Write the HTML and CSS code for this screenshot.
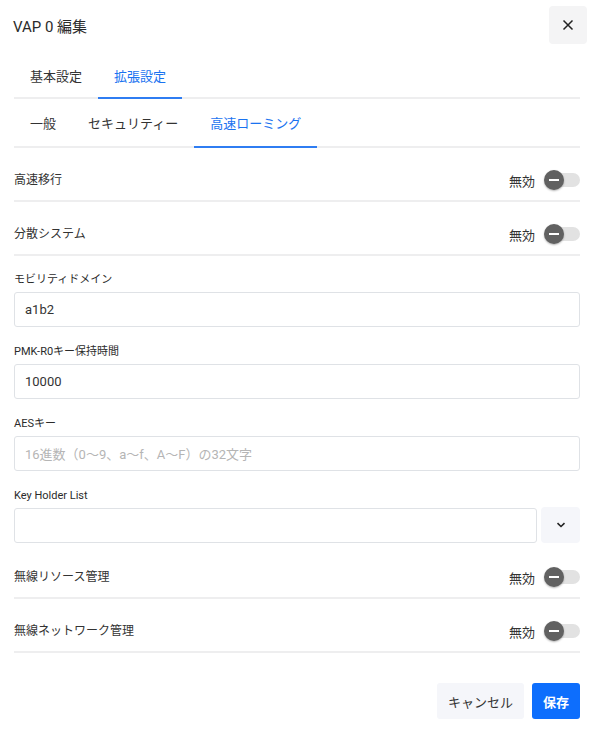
FILE: index.html
```html
<!DOCTYPE html>
<html lang="ja">
<head>
<meta charset="utf-8">
<title>VAP 0 編集</title>
<link rel="stylesheet" href="styles.css">
</head>
<body>
<div class="dialog">
  <header class="dlg-header">
    <h1 class="dlg-title">VAP 0 編集</h1>
    <button class="close-btn" aria-label="閉じる">
      <svg width="12" height="12" viewBox="0 0 12 12"><path d="M1.5 1.5 L10.5 10.5 M10.5 1.5 L1.5 10.5" stroke="#222" stroke-width="1.5" fill="none"/></svg>
    </button>
  </header>

  <nav class="tabs tabs-main">
    <span class="tab">基本設定</span>
    <span class="tab active">拡張設定</span>
  </nav>
  <nav class="tabs tabs-sub">
    <span class="tab">一般</span>
    <span class="tab">セキュリティー</span>
    <span class="tab active">高速ローミング</span>
  </nav>

  <div class="form">
    <div class="switch-row">
      <span class="row-label">高速移行</span>
      <span class="switch-wrap"><span class="switch-text">無効</span><span class="switch"><span class="knob"></span></span></span>
    </div>
    <div class="switch-row">
      <span class="row-label">分散システム</span>
      <span class="switch-wrap"><span class="switch-text">無効</span><span class="switch"><span class="knob"></span></span></span>
    </div>

    <div class="field first-field">
      <label class="field-label">モビリティドメイン</label>
      <div class="input">a1b2</div>
    </div>
    <div class="field">
      <label class="field-label">PMK-R0キー保持時間</label>
      <div class="input">10000</div>
    </div>
    <div class="field">
      <label class="field-label">AESキー</label>
      <div class="input placeholder">16進数（0〜9、a〜f、A〜F）の32文字</div>
    </div>
    <div class="field">
      <label class="field-label">Key Holder List</label>
      <div class="select-row">
        <div class="input grow"></div>
        <button class="drop-btn" aria-label="展開">
          <svg width="10" height="6" viewBox="0 0 10 6"><path d="M1.5 1.2 L5 4.5 L8.5 1.2" stroke="#222" stroke-width="1.6" fill="none"/></svg>
        </button>
      </div>
    </div>

    <div class="switch-row after-field">
      <span class="row-label">無線リソース管理</span>
      <span class="switch-wrap"><span class="switch-text">無効</span><span class="switch"><span class="knob"></span></span></span>
    </div>
    <div class="switch-row">
      <span class="row-label">無線ネットワーク管理</span>
      <span class="switch-wrap"><span class="switch-text">無効</span><span class="switch"><span class="knob"></span></span></span>
    </div>
  </div>

  <footer class="dlg-footer">
    <button class="btn btn-cancel">キャンセル</button>
    <button class="btn btn-save">保存</button>
  </footer>
</div>
</body>
</html>
```

FILE: styles.css
```css
* { box-sizing: border-box; }
html, body {
  margin: 0;
  padding: 0;
  background: #fff;
}
body {
  font-family: Roboto, "Noto Sans CJK JP", sans-serif;
  color: #333;
  width: 594px;
}
.dialog {
  padding: 6px 14px 0 14px;
}
.dlg-header {
  display: flex;
  align-items: center;
  justify-content: space-between;
  height: 38px;
  margin-right: -7px;
}
.dlg-title {
  margin: 0;
  font-size: 15px;
  font-weight: 400;
  color: #2b2b2b;
  margin-left: -1px;
}
.close-btn {
  width: 38px;
  height: 38px;
  border: none;
  border-radius: 4px;
  background: #f4f4f5;
  display: flex;
  align-items: center;
  justify-content: center;
  padding: 0;
}
.tabs {
  display: flex;
  border-bottom: 2px solid #eeeeef;
}
.tabs-main {
  margin-top: 10px;
}
.tab {
  font-size: 13px;
  color: #333;
  padding: 0 16px;
  position: relative;
  display: flex;
  align-items: center;
}
.tabs-main .tab { height: 43px; }
.tabs-sub .tab { height: 47px; }
.tab.active {
  color: #1a73f0;
}
.tab.active::after {
  content: "";
  position: absolute;
  left: 0;
  right: 0;
  bottom: -2px;
  height: 2px;
  background: #2f7df2;
}
.form {
  display: flex;
  flex-direction: column;
}
.switch-row {
  display: flex;
  align-items: center;
  justify-content: space-between;
  padding: 22px 0 10px;
  border-bottom: 2px solid #eeeeef;
}
.switch-row.after-field { padding-top: 24px; }
.row-label {
  font-size: 12px;
  color: #333;
  line-height: 20px;
}
.switch-wrap {
  display: flex;
  align-items: center;
  gap: 9px;
}
.switch-text {
  font-size: 13px;
  color: #333;
}
.switch {
  position: relative;
  width: 36px;
  height: 20px;
  display: flex;
  align-items: center;
}
.switch::before {
  content: "";
  position: absolute;
  left: 9px;
  right: 0;
  top: 3px;
  height: 14px;
  border-radius: 7px;
  background: #e2e2e2;
}
.knob {
  position: relative;
  width: 20px;
  height: 20px;
  border-radius: 50%;
  background: #616161;
  box-shadow: 0 1px 2px rgba(0,0,0,0.3);
}
.knob::after {
  content: "";
  position: absolute;
  left: 5px;
  right: 5px;
  top: 9px;
  height: 2px;
  background: #fff;
}
.field {
  display: flex;
  flex-direction: column;
  margin-top: 17px;
}
.field.first-field { margin-top: 16px; }
.field-label {
  font-size: 11px;
  font-weight: 400;
  line-height: 16px;
  color: #2b2b2b;
  margin-bottom: 4px;
}
.input {
  height: 35px;
  border: 1px solid #dfe2e6;
  border-radius: 3px;
  padding: 0 10px;
  display: flex;
  align-items: center;
  font-size: 13px;
  color: #333;
}
.input.placeholder {
  color: #b5b5b5;
}
.select-row {
  display: flex;
  gap: 4px;
}
.input.grow { flex: 1; }
.drop-btn {
  width: 39px;
  height: 36px;
  margin-top: -1px;
  border: none;
  border-radius: 4px;
  background: #f5f6fa;
  display: flex;
  align-items: center;
  justify-content: center;
  padding: 0;
}
.dlg-footer {
  display: flex;
  justify-content: flex-end;
  gap: 8px;
  margin-top: 30px;
}
.btn {
  height: 36px;
  border: none;
  border-radius: 3px;
  font-family: Roboto, "Noto Sans CJK JP", sans-serif;
  font-size: 13px;
  white-space: nowrap;
  padding: 0 10px;
}
.btn-cancel {
  background: #f5f6fa;
  color: #333;
  min-width: 87px;
}
.btn-save {
  background: #0d6efd;
  color: #fff;
  font-weight: 700;
  min-width: 48px;
}
```
